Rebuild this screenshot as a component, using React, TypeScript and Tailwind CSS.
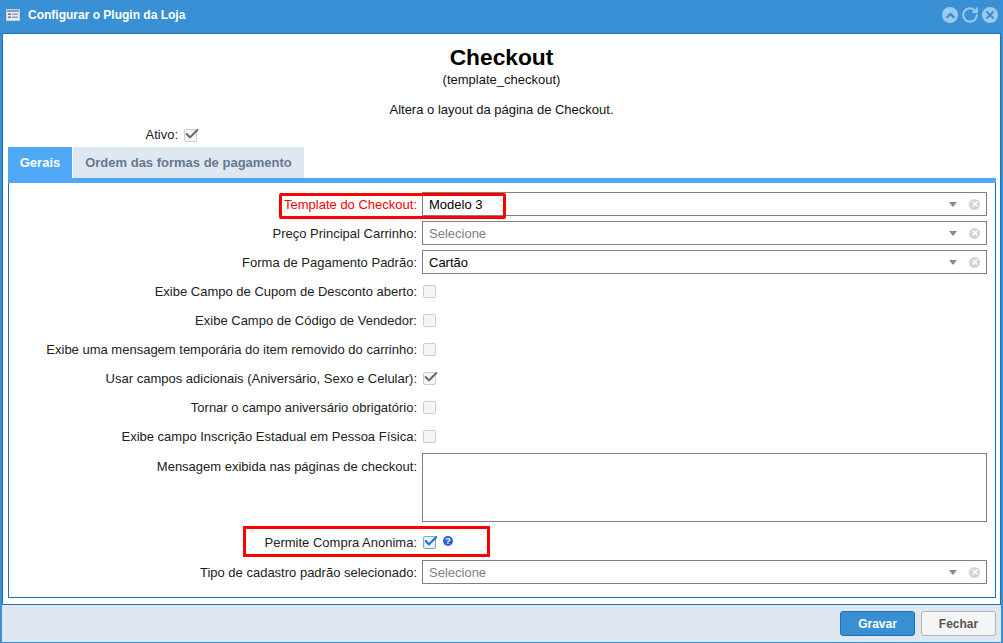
import { ChevronUp, RotateCw, X, Check } from 'lucide-react';

function Caret() {
  return <span className="w-0 h-0 border-x-[4px] border-x-transparent border-t-[5px] border-t-[#888]" />;
}

function ClearIcon() {
  return (
    <span className="flex items-center justify-center w-[11px] h-[11px] rounded-full bg-[#d4d4d4]">
      <X className="w-[8px] h-[8px] text-white" strokeWidth={4} />
    </span>
  );
}

function Checkbox({ checked, active }: { checked?: boolean; active?: boolean }) {
  return (
    <span
      className={`relative block w-[13px] h-[13px] rounded-[2px] border ${
        active ? 'border-[#7aa9d0] bg-[#e8f1f9]' : 'border-[#cdcdcd] bg-[#f5f5f5]'
      }`}
    >
      {checked && (
        <Check
          className={`absolute -top-[4px] -left-[1px] w-[16px] h-[16px] ${active ? 'text-[#1f70b5]' : 'text-[#666]'}`}
          strokeWidth={3}
        />
      )}
    </span>
  );
}

function Select({ value, placeholder }: { value?: string; placeholder?: string }) {
  return (
    <div className="flex-1 self-start h-[24px] border border-[#808080] bg-white flex items-center pl-[6px] pr-[6px]">
      <span className={`flex-1 pt-[1px] text-[13px] ${value ? 'text-black' : 'text-[#808080]'}`}>{value ?? placeholder}</span>
      <Caret />
      <span className="ml-[12px]">
        <ClearIcon />
      </span>
    </div>
  );
}

function Row({ label, red, children }: { label: string; red?: boolean; children: React.ReactNode }) {
  return (
    <div className="flex items-center h-[25px] mb-[4px]">
      <label className={`w-[413px] pr-[5px] text-right text-[13px] ${red ? 'text-[#ff0000]' : 'text-[#222]'}`}>{label}</label>
      {children}
    </div>
  );
}

function CheckRow({ label, checked }: { label: string; checked?: boolean }) {
  return (
    <Row label={label}>
      <span className="ml-[1px]">
        <Checkbox checked={checked} />
      </span>
    </Row>
  );
}

export default function App() {
  return (
    <div className="relative w-[1003px] h-[643px] flex flex-col bg-[#3a90d4] font-['Liberation_Sans',Arial,sans-serif] overflow-hidden">
      <header className="h-[33px] shrink-0 flex items-center pl-[6px] pr-[5px] pb-[3px] text-white">
        <svg width="14" height="12" viewBox="0 0 14 12" className="mr-[8px]">
          <rect x="0.5" y="0.5" width="13" height="11" fill="#e8edf5" stroke="#c5cfe0" />
          <rect x="1" y="1" width="12" height="2" fill="#8f9dbd" />
          <rect x="2" y="4.5" width="3" height="1.5" fill="#5c6f9b" />
          <rect x="2" y="7.5" width="3" height="1.5" fill="#5c6f9b" />
          <rect x="6" y="4.5" width="6" height="1.5" fill="#8f9dbd" />
          <rect x="6" y="7.5" width="6" height="1.5" fill="#8f9dbd" />
        </svg>
        <h1 className="flex-1 text-[12px] font-bold">Configurar o Plugin da Loja</h1>
        <div className="flex items-center gap-[3px] text-[#9ccaec]">
          <span className="flex items-center justify-center w-[16px] h-[16px] rounded-full bg-[#9ccaec]">
            <ChevronUp className="w-[13px] h-[13px] text-[#3a90d4]" strokeWidth={4} />
          </span>
          <RotateCw className="w-[18px] h-[18px]" strokeWidth={2.5} />
          <span className="flex items-center justify-center w-[16px] h-[16px] rounded-full bg-[#9ccaec]">
            <X className="w-[12px] h-[12px] text-[#3a90d4]" strokeWidth={4} />
          </span>
        </div>
      </header>

      <main className="mx-[2px] w-[999px] h-[572px] shrink-0 border border-[#1f70b5] bg-white px-[5px] flex flex-col">
        <div className="flex flex-col items-center pt-[9px] text-[#111]">
          <h2 className="text-[22.75px] leading-[28px] font-bold text-black">Checkout</h2>
          <p className="text-[13px] leading-[14px] mt-[2px]">(template_checkout)</p>
          <p className="text-[13px] leading-[14px] mt-[16px]">Altera o layout da página de Checkout.</p>
        </div>
        <div className="flex items-center h-[16px] mt-[10px] text-[13px] text-[#222]">
          <span className="w-[170px] text-right">Ativo:</span>
          <span className="ml-[6px]">
            <Checkbox checked />
          </span>
        </div>

        <div className="flex mt-[4px] h-[31px] text-[13px] font-bold">
          <div className="w-[64px] flex items-center justify-center bg-[#4fa8f5] text-white">Gerais</div>
          <div className="ml-[1px] w-[231px] flex items-center justify-center bg-[#dfe7f3] text-[#68788f]">Ordem das formas de pagamento</div>
        </div>
        <div className="h-[5px] bg-[#4fa8f5] w-[988px]" />

        <section className="w-[988px] h-[415px] border border-t-0 border-[#1f70b5] pt-[9px] pr-[8px]">
          <Row label="Template do Checkout:" red>
            <Select value="Modelo 3" />
          </Row>
          <Row label="Preço Principal Carrinho:">
            <Select placeholder="Selecione" />
          </Row>
          <Row label="Forma de Pagamento Padrão:">
            <Select value="Cartão" />
          </Row>
          <CheckRow label="Exibe Campo de Cupom de Desconto aberto:" />
          <CheckRow label="Exibe Campo de Código de Vendedor:" />
          <CheckRow label="Exibe uma mensagem temporária do item removido do carrinho:" />
          <CheckRow label="Usar campos adicionais (Aniversário, Sexo e Celular):" checked />
          <CheckRow label="Tornar o campo aniversário obrigatório:" />
          <CheckRow label="Exibe campo Inscrição Estadual em Pessoa Física:" />
          <div className="flex items-start h-[69px] mb-[8px]">
            <label className="w-[413px] pr-[5px] pt-[4px] text-right text-[13px] text-[#222]">Mensagem exibida nas páginas de checkout:</label>
            <div className="flex-1 h-[69px] border border-[#808080]" />
          </div>
          <div className="flex items-center h-[25px] mb-[5px]">
            <label className="w-[413px] pr-[5px] text-right text-[13px] text-[#222]">Permite Compra Anonima:</label>
            <span className="ml-[1px] flex items-center gap-[7px]">
              <Checkbox checked active />
              <span className="flex items-center justify-center w-[10px] h-[10px] -mt-[3px] rounded-full bg-[#2f62d6] text-white text-[9px] leading-none font-bold">?</span>
            </span>
          </div>
          <Row label="Tipo de cadastro padrão selecionado:">
            <Select placeholder="Selecione" />
          </Row>
        </section>
      </main>

      <footer className="mx-[2px] w-[999px] h-[37px] shrink-0 bg-[#dfe8f2] flex items-center justify-end gap-[6px] pr-[5px] text-[12px] font-bold">
        <button className="w-[75px] h-[25px] rounded-[3px] border border-[#1f70b5] bg-[#3a8fd3] text-white">Gravar</button>
        <button className="w-[75px] h-[25px] rounded-[3px] border border-[#b5b5b5] bg-[#f5f5f5] text-[#555]">Fechar</button>
      </footer>

      <div className="absolute left-[279px] top-[193px] w-[227px] h-[26px] border-[3px] border-[#ff0000] rounded-[2px]" />
      <div className="absolute left-[243px] top-[526px] w-[247px] h-[31px] border-[3px] border-[#ff0000]" />
    </div>
  );
}
